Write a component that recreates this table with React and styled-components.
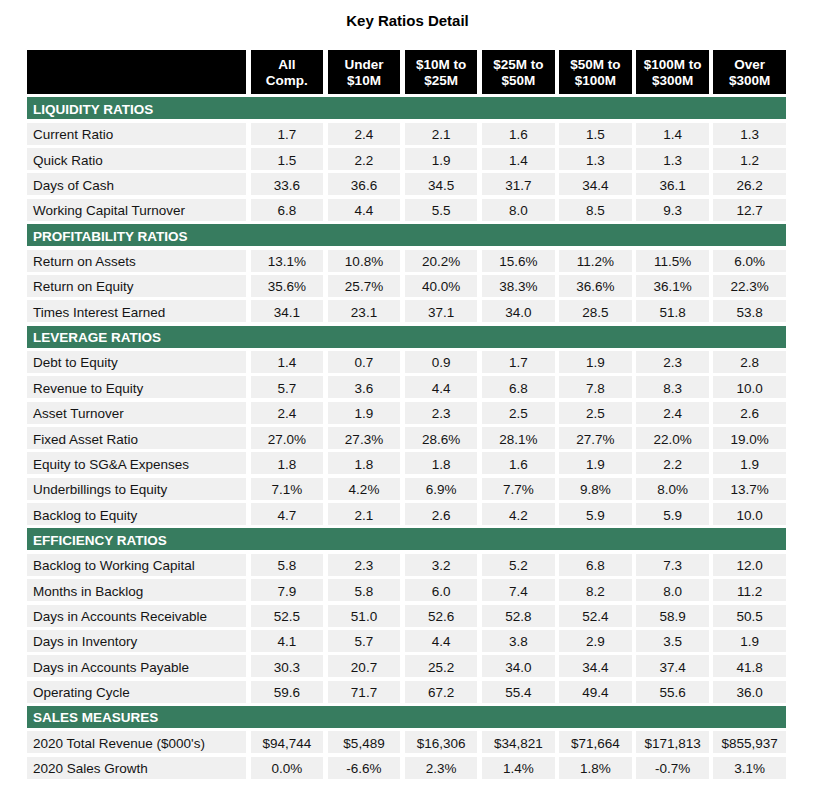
import React from 'react';
import styled, { createGlobalStyle } from 'styled-components';

const GlobalStyle = createGlobalStyle`
  html, body {
    margin: 0;
    padding: 0;
    background: #ffffff;
  }
  body {
    font-family: "Liberation Sans", Arial, Helvetica, sans-serif;
    color: #111111;
  }
`;

const Page = styled.div`
  width: 815px;
  padding-top: 12px;
`;

const Title = styled.h1`
  margin: 0 0 21px 0;
  font-size: 15px;
  line-height: 17px;
  font-weight: 700;
  text-align: center;
  color: #000000;
`;

const Table = styled.div`
  margin-left: 27px;
  width: 759px;
  display: grid;
  grid-template-columns: 219px repeat(7, 1fr);
  grid-template-rows: 44px;
  grid-auto-rows: 22px;
  column-gap: 4.6px;
  row-gap: 3.37px;
`;

const HeadCell = styled.div`
  background: #000000;
  color: #ffffff;
  font-weight: 700;
  font-size: 13.5px;
  line-height: 16px;
  display: flex;
  align-items: center;
  justify-content: center;
  text-align: center;
  padding-top: 1px;
`;

const SectionBar = styled.div`
  grid-column: 1 / -1;
  background: #377c5f;
  color: #ffffff;
  font-weight: 700;
  font-size: 13.5px;
  display: flex;
  align-items: center;
  padding: 2px 0 0 6px;
`;

const Cell = styled.div`
  background: #f0f0f0;
  color: #141414;
  font-size: 13.5px;
  display: flex;
  align-items: center;
  justify-content: ${p => (p.$label ? 'flex-start' : 'center')};
  padding: 2px 0 0 ${p => (p.$label ? '6px' : '0')};
  white-space: nowrap;
`;

const columns = [
  ['All', 'Comp.'],
  ['Under', '$10M'],
  ['$10M to', '$25M'],
  ['$25M to', '$50M'],
  ['$50M to', '$100M'],
  ['$100M to', '$300M'],
  ['Over', '$300M'],
];

const sections = [
  {
    title: 'LIQUIDITY RATIOS',
    rows: [
      ['Current Ratio', '1.7', '2.4', '2.1', '1.6', '1.5', '1.4', '1.3'],
      ['Quick Ratio', '1.5', '2.2', '1.9', '1.4', '1.3', '1.3', '1.2'],
      ['Days of Cash', '33.6', '36.6', '34.5', '31.7', '34.4', '36.1', '26.2'],
      ['Working Capital Turnover', '6.8', '4.4', '5.5', '8.0', '8.5', '9.3', '12.7'],
    ],
  },
  {
    title: 'PROFITABILITY RATIOS',
    rows: [
      ['Return on Assets', '13.1%', '10.8%', '20.2%', '15.6%', '11.2%', '11.5%', '6.0%'],
      ['Return on Equity', '35.6%', '25.7%', '40.0%', '38.3%', '36.6%', '36.1%', '22.3%'],
      ['Times Interest Earned', '34.1', '23.1', '37.1', '34.0', '28.5', '51.8', '53.8'],
    ],
  },
  {
    title: 'LEVERAGE RATIOS',
    rows: [
      ['Debt to Equity', '1.4', '0.7', '0.9', '1.7', '1.9', '2.3', '2.8'],
      ['Revenue to Equity', '5.7', '3.6', '4.4', '6.8', '7.8', '8.3', '10.0'],
      ['Asset Turnover', '2.4', '1.9', '2.3', '2.5', '2.5', '2.4', '2.6'],
      ['Fixed Asset Ratio', '27.0%', '27.3%', '28.6%', '28.1%', '27.7%', '22.0%', '19.0%'],
      ['Equity to SG&A Expenses', '1.8', '1.8', '1.8', '1.6', '1.9', '2.2', '1.9'],
      ['Underbillings to Equity', '7.1%', '4.2%', '6.9%', '7.7%', '9.8%', '8.0%', '13.7%'],
      ['Backlog to Equity', '4.7', '2.1', '2.6', '4.2', '5.9', '5.9', '10.0'],
    ],
  },
  {
    title: 'EFFICIENCY RATIOS',
    rows: [
      ['Backlog to Working Capital', '5.8', '2.3', '3.2', '5.2', '6.8', '7.3', '12.0'],
      ['Months in Backlog', '7.9', '5.8', '6.0', '7.4', '8.2', '8.0', '11.2'],
      ['Days in Accounts Receivable', '52.5', '51.0', '52.6', '52.8', '52.4', '58.9', '50.5'],
      ['Days in Inventory', '4.1', '5.7', '4.4', '3.8', '2.9', '3.5', '1.9'],
      ['Days in Accounts Payable', '30.3', '20.7', '25.2', '34.0', '34.4', '37.4', '41.8'],
      ['Operating Cycle', '59.6', '71.7', '67.2', '55.4', '49.4', '55.6', '36.0'],
    ],
  },
  {
    title: 'SALES MEASURES',
    rows: [
      ["2020 Total Revenue ($000's)", '$94,744', '$5,489', '$16,306', '$34,821', '$71,664', '$171,813', '$855,937'],
      ['2020 Sales Growth', '0.0%', '-6.6%', '2.3%', '1.4%', '1.8%', '-0.7%', '3.1%'],
    ],
  },
];

export default function App() {
  return (
    <Page>
      <GlobalStyle />
      <Title>Key Ratios Detail</Title>
      <Table>
        <HeadCell />
        {columns.map(([a, b]) => (
          <HeadCell key={a + b}>
            {a}
            <br />
            {b}
          </HeadCell>
        ))}
        {sections.map(section => (
          <React.Fragment key={section.title}>
            <SectionBar>{section.title}</SectionBar>
            {section.rows.map(row =>
              row.map((value, i) => (
                <Cell key={row[0] + i} $label={i === 0}>
                  {value}
                </Cell>
              ))
            )}
          </React.Fragment>
        ))}
      </Table>
    </Page>
  );
}
